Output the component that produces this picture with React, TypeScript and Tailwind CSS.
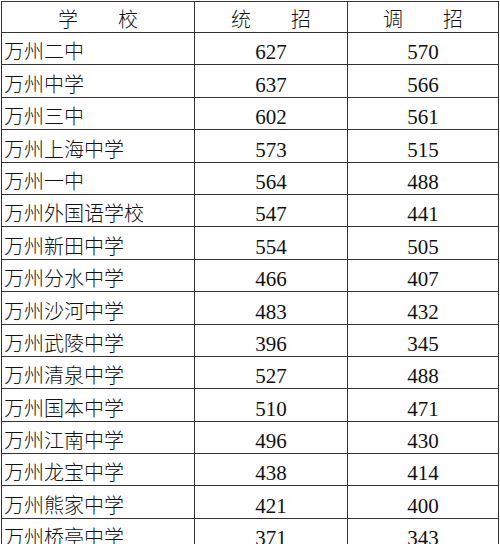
import React from "react";

const rows: [string, string, string][] = [
  ["万州二中", "627", "570"],
  ["万州中学", "637", "566"],
  ["万州三中", "602", "561"],
  ["万州上海中学", "573", "515"],
  ["万州一中", "564", "488"],
  ["万州外国语学校", "547", "441"],
  ["万州新田中学", "554", "505"],
  ["万州分水中学", "466", "407"],
  ["万州沙河中学", "483", "432"],
  ["万州武陵中学", "396", "345"],
  ["万州清泉中学", "527", "488"],
  ["万州国本中学", "510", "471"],
  ["万州江南中学", "496", "430"],
  ["万州龙宝中学", "438", "414"],
  ["万州熊家中学", "421", "400"],
  ["万州桥亭中学", "371", "343"],
];

const font = { fontFamily: '"Liberation Serif", "Noto Sans CJK SC", serif' };

export default function App() {
  return (
    <div className="w-[500px] h-[544px] overflow-hidden bg-white text-[#111]" style={font}>
      <div className="mt-[1px] ml-[1px] w-[498px] border-l border-t border-[#333]">
        <div className="flex h-[31px] border-b border-[#333]">
          <div className="w-[193px] border-r border-[#333] flex items-end justify-center pb-[2px] text-[20px] leading-[20px] font-light">
            学　　校
          </div>
          <div className="w-[153px] border-r border-[#333] flex items-end justify-center pb-[2px] text-[20px] leading-[20px] font-light">
            统　　招
          </div>
          <div className="w-[151px] border-r border-[#333] flex items-end justify-center pb-[2px] text-[20px] leading-[20px] font-light">
            调　　招
          </div>
        </div>
        {rows.map(([name, a, b]) => (
          <div key={name} className="flex h-[32.4px] border-b border-[#333]">
            <div className="w-[193px] border-r border-[#333] flex items-end pl-[2px] pb-[2px] text-[20px] leading-[20px] font-light whitespace-nowrap">
              {name}
            </div>
            <div className="w-[153px] border-r border-[#333] flex items-end justify-center pb-[2px] text-[21px] leading-[20px]">
              {a}
            </div>
            <div className="w-[151px] border-r border-[#333] flex items-end justify-center pb-[2px] text-[21px] leading-[20px]">
              {b}
            </div>
          </div>
        ))}
      </div>
    </div>
  );
}
